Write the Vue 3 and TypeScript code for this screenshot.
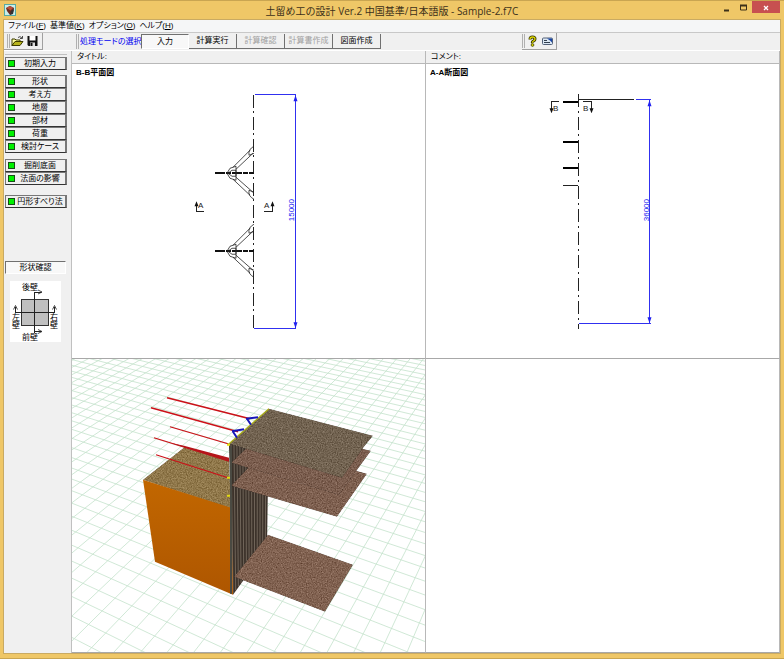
<script setup lang="ts">
import { ref } from 'vue'

interface Mode { label: string; disabled: boolean }
interface Line { x1: number; y1: number; x2: number; y2: number }

const menus = [
  { label: 'ファイル', key: 'F' },
  { label: '基準値', key: 'K' },
  { label: 'オプション', key: 'O' },
  { label: 'ヘルプ', key: 'H' },
]

const modes: Mode[] = [
  { label: '入力', disabled: false },
  { label: '計算実行', disabled: false },
  { label: '計算確認', disabled: true },
  { label: '計算書作成', disabled: true },
  { label: '図面作成', disabled: false },
]
const activeMode = ref('入力')

const inputGroups: string[][] = [
  ['初期入力'],
  ['形状', '考え方', '地層', '部材', '荷重', '検討ケース'],
  ['掘削底面', '法面の影響'],
  ['円形すべり法'],
]

// Ground grid: two families of lines, each running to its own vanishing point.
function rays(vx: number, vy: number, start: number, step: number, from: number, to: number): Line[] {
  const base = 700
  const list: Line[] = []
  for (let k = from; k <= to; k++) {
    const x = start + step * k
    list.push({ x1: vx, y1: vy, x2: x + (x - vx) * 0.2, y2: base + (base - vy) * 0.2 })
  }
  return list
}
const grid: Line[] = [
  ...rays(-1014, 78, 288, 47.6, -8, 46),
  ...rays(656, 62, 387, 28.8, -42, 8),
]

// Sheet piles along the wall, back to front.
const piles: Line[] = Array.from({ length: 13 }, (_, i) => {
  const t = i / 13
  const x = 231 + 38 * t
  return { x1: x, y1: 444 - 35 * t, x2: x + 2 - 3 * t, y2: 594 - 47 * t }
})

const anchors: Line[] = [
  { x1: 167, y1: 398, x2: 250, y2: 419 },
  { x1: 151, y1: 408, x2: 238, y2: 432 },
  { x1: 170, y1: 427, x2: 228, y2: 444 },
  { x1: 154, y1: 438, x2: 228, y2: 461 },
  { x1: 156, y1: 455, x2: 228, y2: 478 },
]
</script>

<template>
  <div class="window">
    <header class="titlebar">
      <svg class="app-icon" viewBox="0 0 12 12" aria-hidden="true">
        <rect x=".5" y=".5" width="11" height="11" fill="#c9eeea" stroke="#58aaa4" />
        <path d="M2 4l4-2 4 2-1 5-3 2-3-4z" fill="#6b2a20" />
        <path d="M2.500 4l3-2 4 1.500-3 3z" fill="#b8503b" />
        <path d="M6 11l1-4 3-2-1 5z" fill="#333" />
      </svg>
      <h1>土留め工の設計 Ver.2 中国基準/日本語版 - Sample-2.f7C</h1>
      <div class="controls">
        <button type="button" aria-label="最小化"><svg viewBox="0 0 10 10"><path d="M2 8.500h5" stroke="#3c3019" stroke-width="2" /></svg></button>
        <button type="button" aria-label="最大化"><svg viewBox="0 0 10 10"><path d="M1.500 3v5h6V3" fill="none" stroke="#3c3019" /><path d="M1 3.500h7" stroke="#3c3019" stroke-width="2" /></svg></button>
        <button type="button" class="close" aria-label="閉じる"><svg viewBox="0 0 10 10"><path d="M3 4l4 4M7 4L3 8" stroke="#fff" stroke-width="1.300" /></svg></button>
      </div>
    </header>

    <div class="client">
      <nav class="menubar">
        <button v-for="m in menus" :key="m.key" type="button">{{ m.label }}(<u>{{ m.key }}</u>)</button>
      </nav>

      <div class="toolbar">
        <div class="band files">
          <i class="grip"></i>
          <button type="button" class="tool" aria-label="開く">
            <svg viewBox="0 0 13 12"><path d="M1 10.500V4h3l1 1h4v2H4z" fill="#ffffa0" stroke="#3d3d00" /><path d="M1 10.500L4 6.500h8l-3 4z" fill="#b8b41c" stroke="#3d3d00" /><path d="M7 2.500q2-2 4 0.500M11.500 1v2.500H9" fill="none" stroke="#222" stroke-width=".8" /></svg>
          </button>
          <button type="button" class="tool" aria-label="保存">
            <svg viewBox="0 0 13 12"><path d="M1.500 1h10v10h-9l-1-1z" fill="#111" /><path d="M3.500 1h6v4.500h-6z" fill="#fff" /><path d="M4 7.500h5V11H4z" fill="#ddd" /><path d="M4.500 8h2v3h-2z" fill="#111" /></svg>
          </button>
        </div>
        <div class="band modes">
          <i class="grip"></i>
          <span class="caption">処理モードの選択</span>
          <button
            v-for="m in modes" :key="m.label" type="button" class="mode"
            :class="{ pressed: activeMode === m.label }" :disabled="m.disabled"
            @click="activeMode = m.label"
          >{{ m.label }}</button>
        </div>
        <div class="band help">
          <i class="grip"></i>
          <button type="button" class="tool" aria-label="ヘルプ">
            <svg viewBox="0 0 13 12"><path d="M4 4.500q0-2.500 2.500-2.500t2.500 2q0 1.200-1.500 2t-1 2" fill="none" stroke="#333300" stroke-width="3" /><path d="M4 4.200q0-2.200 2.500-2.200t2.500 2q0 1.200-1.500 2t-1 1.800" fill="none" stroke="#d9d300" stroke-width="1.300" /><circle cx="6.500" cy="10" r="1.400" fill="#d9d300" stroke="#333300" stroke-width=".7" /></svg>
          </button>
          <button type="button" class="tool" aria-label="バージョン情報">
            <svg viewBox="0 0 13 12"><rect x="1.500" y="3" width="10" height="6.500" rx="1" fill="#dce8f4" stroke="#526078" /><path d="M6 3.500h5v4L9 5.500z" fill="#1844a4" /><path d="M3 5.500h3M3 7.500h6" stroke="#34404e" /></svg>
          </button>
        </div>
      </div>

      <div class="body">
        <aside class="sidebar">
          <div v-for="(g, i) in inputGroups" :key="i" class="group">
            <button v-for="label in g" :key="label" type="button" class="item">
              <i class="lamp"></i><span>{{ label }}</span>
            </button>
          </div>
          <button type="button" class="check">形状確認</button>
          <svg class="compass" viewBox="0 0 51 61" role="img" aria-label="壁の方向">
            <rect width="51" height="61" fill="#fff" />
            <rect x="11.500" y="18.500" width="27" height="26" fill="#c0c0c0" stroke="#333" />
            <path d="M24.500 11v41M5 31.500h40M24.500 11.500h7M24.500 50.500h7M5.500 31v-5M44.500 31v-5" fill="none" stroke="#222" />
            <path d="M28 9l4 2-4 2M28 48.500l4 2-4 2M3.500 28.500l2-4 2 4M42.500 28.500l2-4 2 4" fill="none" stroke="#222" stroke-width=".8" />
            <g class="wall-name">
              <text x="12" y="9">後壁</text>
              <text x="12" y="59">前壁</text>
              <text x="2" y="39">左</text><text x="2" y="47">壁</text>
              <text x="40" y="39">右</text><text x="40" y="47">壁</text>
            </g>
          </svg>
        </aside>

        <main class="views">
          <div class="field">タイトル:</div>
          <div class="field">コメント:</div>

          <section class="view">
            <h2>B-B平面図</h2>
            <svg class="drawing" viewBox="72 79 353 278">
              <g fill="none" stroke="#222" shape-rendering="crispEdges">
                <path d="M253.500 95V329" stroke-dasharray="13 3 2 4" />
                <path d="M196.500 203V212M196 211.500H204M264 211.500H273M272.500 212V203" />
              </g>
              <path d="M196.500 201l-2 5h4zM272.500 201l-2 5h4z" fill="#111" />
              <g v-for="dy in [0, 78]" :key="dy" :transform="`translate(0 ${dy})`" fill="none" stroke="#222" stroke-width=".8">
                <path d="M215 172.800H254" stroke="#111" stroke-width="2" stroke-dasharray="10 1 5 1" />
                <path d="M233 167L250 150M236 169L253 153M233 179L250 195M236 177L253 192M236 166l-6 2-3 5 3 5 6 2M236 166v14" />
                <path d="M254 146q-6 3-5 9l5-2M254 199q-6-3-5-9l5 2M228 173l4-3h4v6h-4z" />
              </g>
              <g class="letter"><text x="198" y="208">A</text><text x="264" y="208">A</text></g>
              <g fill="none" stroke="#3030f0" shape-rendering="crispEdges">
                <path d="M255 94.500H296M295.500 95V329M254 328.500H296" />
              </g>
              <path d="M295.500 95l-2 6h4zM295.500 328l-2-6h4z" fill="#2020f0" />
              <text class="dimension" transform="translate(294 221) rotate(-90)">15000</text>
            </svg>
          </section>

          <section class="view">
            <h2>A-A断面図</h2>
            <svg class="drawing" viewBox="426 79 353 278">
              <g fill="none" stroke="#222" shape-rendering="crispEdges">
                <path d="M578.500 94V329" stroke-dasharray="13 4 2 4" />
                <path d="M579 99.500H634M559 101.500H551.500V110M583 101.500H591.500V110" />
                <path d="M563 102H578M563 142H578M563 167.500H578" stroke="#000" stroke-width="2" />
                <path d="M563 185.500H578" />
              </g>
              <path d="M551.500 113l-2-5h4zM591.500 113l-2-5h4z" fill="#111" />
              <g class="letter"><text x="553" y="111">B</text><text x="583" y="111">B</text></g>
              <g fill="none" stroke="#3030f0" shape-rendering="crispEdges">
                <path d="M636 99.500H651M649.500 100V324M579 323.500H651" />
              </g>
              <path d="M649.500 100l-2 6h4zM649.500 323l-2-6h4z" fill="#2020f0" />
              <text class="dimension" transform="translate(649 221) rotate(-90)">36000</text>
            </svg>
          </section>

          <section class="view">
            <svg class="drawing" viewBox="72 359 353 294" preserveAspectRatio="xMidYMid slice" role="img" aria-label="3D表示">
              <defs>
                <filter id="soil" x="0" y="0" width="1" height="1" color-interpolation-filters="sRGB">
                  <feTurbulence type="fractalNoise" baseFrequency=".8" numOctaves="2" seed="4" />
                  <feColorMatrix values=".5 .5 0 0 0  .5 .5 0 0 0  .5 .5 0 0 0  0 0 0 0 1" result="n" />
                  <feComposite in="SourceGraphic" in2="n" operator="arithmetic" k2="1" k3=".5" k4="-.24" />
                  <feComposite in2="SourceGraphic" operator="in" />
                </filter>
                <linearGradient id="clay" x1="0" y1="0" x2="0" y2="1">
                  <stop offset="0" stop-color="#c26700" /><stop offset="1" stop-color="#ae5600" />
                </linearGradient>
              </defs>
              <g stroke="#c4e2cb" stroke-width=".8">
                <line v-for="(l, i) in grid" :key="i" v-bind="l" />
              </g>
              <polygon points="229,445 269,409 267,548 233,595" fill="#3c322a" />
              <g stroke="#7d7266" stroke-width=".8">
                <line v-for="(l, i) in piles" :key="i" v-bind="l" />
              </g>
              <g filter="url(#soil)">
                <polygon points="143,480 185,447 229,461 231,509" fill="#8d7548" />
                <polygon points="234,577 268,535 353,565 325,612" fill="#7e5f4e" />
                <polygon points="231,486 268,447 367,474 337,517" fill="#7b5d4d" />
              </g>
              <g filter="url(#soil)">
                <polygon points="231,463 268,428 371,451 339,495" fill="#785b4c" />
              </g>
              <g filter="url(#soil)">
                <polygon points="229,444 269,409 373,436 364,447 342,478" fill="#6f604e" />
              </g>
              <polygon points="143,480 231,508 233,595 155,562" fill="url(#clay)" />
              <path d="M231 447V594" stroke="#4a4a42" stroke-width="2" />
              <g stroke="#cc1018" stroke-width="1.300">
                <line v-for="(l, i) in anchors" :key="i" v-bind="l" />
              </g>
              <polygon points="170,443 184,446 229,458 229,462" fill="#b5151a" />
              <path d="M228 445L269 409" stroke="#a8ac18" stroke-width="1.300" />
              <path d="M246 419L258 417.500M247 419L251 425M232 431.500L244 429.500M233 432L237 438" stroke="#1616b8" stroke-width="2" />
              <path d="M227 445h3M227 478h3M227 496h3" stroke="#e4dc10" stroke-width="2" />
            </svg>
          </section>

          <section class="view"></section>
        </main>
      </div>
    </div>
  </div>
</template>

<style>
body { margin: 0; }
</style>

<style scoped>
.window {
  box-sizing: border-box;
  display: flex;
  flex-direction: column;
  height: 100vh;
  padding: 0 4px 5px;
  background: #efc767;
  border-top: 1px solid #c9a551;
  border-bottom: 1px solid #c9a551;
  color: #000;
  font-family: "Liberation Sans", "Noto Sans CJK JP", sans-serif;
  font-size: 8px;
  line-height: 12px;
  font-feature-settings: "palt";
}
button {
  padding: 0;
  border: 0;
  background: none;
  color: inherit;
  font: inherit;
  font-feature-settings: inherit;
  white-space: nowrap;
}
svg { display: block; }

.titlebar {
  display: grid;
  grid-template-columns: 1fr auto 1fr;
  flex: none;
  height: 19px;
}
.app-icon { width: 12px; height: 12px; margin-top: 3px; }
h1 {
  margin: 0;
  color: #3c3019;
  font: 400 10px/20px "Open Sans", "Noto Sans CJK JP", sans-serif;
}
.controls { display: flex; justify-content: flex-end; align-items: flex-start; }
.controls button { display: grid; place-items: center; width: 17px; height: 12px; }
.controls .close { width: 28px; background: #c75050; }
.controls svg { width: 10px; height: 10px; }

.client {
  display: flex;
  flex: 1;
  flex-direction: column;
  min-height: 0;
  background: #f0f0f0;
  box-shadow: 0 0 0 1px #c9aa62;
}
.menubar {
  display: flex;
  gap: 4px;
  flex: none;
  height: 12px;
  padding-left: 4px;
  background: #f5f6f7;
  border-bottom: 1px solid #c8c8c8;
}
.toolbar { display: flex; flex: none; height: 17px; border-bottom: 1px solid #fff; }
.band { display: flex; align-items: center; }
.files { box-sizing: border-box; width: 39px; padding-left: 3px; border-right: 1px solid #a0a0a0; border-bottom: 1px solid #a0a0a0; }
.modes { margin-left: 33px; }
.help { margin-left: 141px; border-right: 1px solid #a0a0a0; border-bottom: 1px solid #a0a0a0; }
.grip {
  align-self: stretch;
  width: 1px;
  margin: 1px 1px 1px 0;
  border-left: 1px solid #b0b0b0;
  border-right: 1px solid #b0b0b0;
}
.tool { width: 15px; }
.tool svg { width: 13px; height: 12px; }
.caption { width: 61px; color: #0000f0; white-space: nowrap; }
.mode {
  box-sizing: border-box;
  width: 48px;
  height: 15px;
  border-right: 1px solid #707070;
  border-bottom: 1px solid #707070;
}
.mode.pressed { background: #f8f8f8; border: 1px solid #707070; border-right-color: #fff; border-bottom-color: #fff; }
.mode:disabled { color: #a0a0a0; }

.body { display: flex; flex: 1; min-height: 0; }
.sidebar {
  box-sizing: border-box;
  flex: none;
  width: 68px;
  padding: 3px 4px 0 1px;
  border-right: 1px solid #c0c0c0;
}
.group { display: grid; margin-top: 5px; }
.group:first-child { margin-top: 0; padding-top: 2px; border-top: 1px solid #c0c0c0; }
.group:nth-child(3) { margin-top: 6px; }
.group:nth-child(4) { margin-top: 10px; }
.item {
  box-sizing: border-box;
  display: flex;
  align-items: center;
  height: 13px;
  padding-left: 2px;
  border: 1px solid #777;
  border-right: 2px solid #777;
  border-bottom-color: #333;
  line-height: 10px;
}
.item span { flex: 1; text-align: center; }
.lamp { box-sizing: border-box; width: 7px; height: 7px; border: 1px solid #174d17; background: #00f000; }
.check {
  box-sizing: border-box;
  width: 61px;
  height: 13px;
  margin-top: 53px;
  border: 1px solid #707070;
  border-right-color: #fff;
  border-bottom-color: #fff;
  background: #f8f8f8;
  line-height: 10px;
}
.compass { width: 51px; height: 61px; margin: 7px 0 0 5px; }
.wall-name { font-size: 8px; }

.views {
  display: grid;
  flex: 1;
  grid-template-columns: 1fr 1fr;
  grid-template-rows: 13px minmax(0, 1fr) minmax(0, 1fr);
  min-width: 0;
}
.field { padding-left: 5px; border-bottom: 1px solid #b8b8b8; border-right: 1px solid #b8b8b8; }
.view {
  display: flex;
  flex-direction: column;
  min-width: 0;
  min-height: 0;
  background: #fff;
  border-right: 1px solid #b8b8b8;
  border-bottom: 1px solid #a8a8a8;
}
h2 { flex: none; margin: 0; padding: 2px 0 0 4px; font-size: 8px; line-height: 13px; }
.drawing { flex: 1; width: 100%; min-height: 0; }
.letter { font-size: 8px; fill: #222; }
.dimension { font-family: "Liberation Sans Narrow", "Liberation Sans", sans-serif; font-size: 8px; fill: #2020f0; }
</style>
